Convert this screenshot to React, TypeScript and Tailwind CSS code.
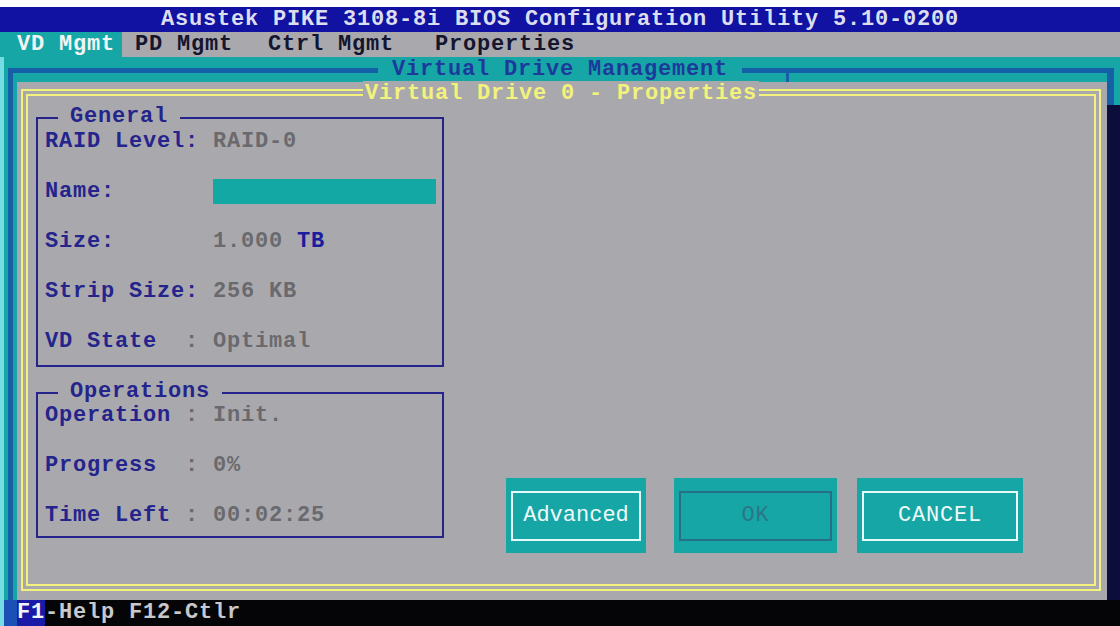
import React from 'react';

// Controller BIOS text-mode screen: 80x25 cells of 14px wide glyphs.

interface GroupBoxProps {
  title: string;
  className?: string;
  children: React.ReactNode;
}

function GroupBox({ title, className = '', children }: GroupBoxProps) {
  return (
    <div className={`border-2 border-[#24248c] ${className}`}>
      <div className="-mt-[14px] h-[24px] flex">
        <span className="ml-[20px] px-[12px] bg-[#a9a9ad] text-[#24248c] leading-[24px]">{title}</span>
      </div>
      {children}
    </div>
  );
}

interface RowProps {
  label: string;
  value?: string;
  className?: string;
  children?: React.ReactNode;
}

function Row({ label, value, className = '', children }: RowProps) {
  return (
    <div className={`h-[25px] pl-[7px] whitespace-pre flex ${className}`}>
      <span className="text-[#24248c]">{label}</span>
      {value && <span className="text-[#6a6a6e]">{value}</span>}
      {children}
    </div>
  );
}

interface DialogButtonProps {
  label: string;
  className: string;
  frame: string;
}

function DialogButton({ label, className, frame }: DialogButtonProps) {
  return (
    <div className={`h-[75px] bg-[#17a6a6] flex items-center px-[5px] ${className}`}>
      <div className={`flex-1 h-[50px] border-2 flex items-center justify-center font-normal ${frame}`}>
        {label}
      </div>
    </div>
  );
}

export default function App() {
  return (
    <div className="w-[1120px] h-[626px] overflow-hidden bg-white flex flex-col font-['Liberation_Mono','DejaVu_Sans_Mono',monospace] font-bold text-[22px] tracking-[0.8px] leading-[25px]">
      <div className="h-[7px] bg-white" />

      {/* title bar */}
      <div className="h-[25px] bg-[#1111a2] text-[#dcdef0] flex items-center justify-center whitespace-pre">
        Asustek PIKE 3108-8i BIOS Configuration Utility 5.10-0200
      </div>

      {/* menu bar */}
      <div className="h-[25px] bg-[#a9a9ad] text-[#151530] flex whitespace-pre">
        <span className="bg-[#17a6a6] text-[#f2f4f4] pl-[17px] pr-[7px]">VD Mgmt</span>
        <span className="ml-[13px]">PD Mgmt</span>
        <span className="ml-[35px]">Ctrl Mgmt</span>
        <span className="ml-[41px]">Properties</span>
      </div>

      <div className="flex-1 flex">
        <div className="w-[4px] bg-[#74dce2]" />

        <div className="flex-1 bg-[#17a6a6] pl-[4px] pt-[11px] flex flex-col">
          {/* Virtual Drive Management window */}
          <div className="flex-1 border-t-[5px] border-l-[5px] border-[#1660a8] flex flex-col">
            <div className="-mt-[16px] h-[25px] grid grid-cols-[1fr_auto_1fr] whitespace-pre">
              <div />
              <span className="bg-[#17a6a6] px-[14px] text-[#1c3a9c]">Virtual Drive Management</span>
              <div className="flex items-end">
                <div className="ml-[44px] w-[3px] h-[9px] bg-[#1660a8]" />
              </div>
            </div>

            <div className="flex-1 ml-[4px] bg-[#a9a9ad] pt-[7px] pl-[4px] pr-[6px] pb-[9px] flex flex-col">
              {/* properties dialog */}
              <div className="flex-1 border-[7px] border-double border-[#f2f27c] flex flex-col">
                <div className="-mt-[15px] h-[25px] flex justify-center whitespace-pre">
                  <span className="bg-[#a9a9ad] px-[2px] text-[#f2f27c]">Virtual Drive 0 - Properties</span>
                </div>

                <div className="flex-1 flex pt-[11px]">
                  <div className="ml-[8px] w-[408px] flex flex-col">
                    <GroupBox title="General" className="pb-[11px]">
                      <Row label="RAID Level:" value=" RAID-0" />
                      <Row label="Name:" className="mt-[25px]">
                        <span>{'       '}</span>
                        <span className="inline-block w-[223px] h-[25px] bg-[#14a8a4]" />
                      </Row>
                      <Row label="Size:" value="       1.000 " className="mt-[25px]">
                        <span className="text-[#1c1c9e]">TB</span>
                      </Row>
                      <Row label="Strip Size:" value=" 256 KB" className="mt-[25px]" />
                      <Row label="VD State" value="  : Optimal" className="mt-[25px]" />
                    </GroupBox>

                    <GroupBox title="Operations" className="mt-[25px] pb-[8px]">
                      <Row label="Operation" value=" : Init." className="-mt-px" />
                      <Row label="Progress" value="  : 0%" className="mt-[25px]" />
                      <Row label="Time Left" value=" : 00:02:25" className="mt-[25px]" />
                    </GroupBox>
                  </div>

                  <div className="flex-1 flex flex-col">
                    <div className="mt-[361px] ml-[62px] flex">
                      <DialogButton label="Advanced" className="w-[140px]" frame="border-[#e6fafa] text-[#eefafa] tracking-[0px]" />
                      <DialogButton label="OK" className="ml-[28px] w-[163px]" frame="border-[#276f86] text-[#2a7688]" />
                      <DialogButton label="CANCEL" className="ml-[20px] w-[166px]" frame="border-[#e6fafa] text-[#eefafa]" />
                    </div>
                  </div>
                </div>
              </div>
            </div>
          </div>
        </div>

        {/* right edge: frame corner and shadow */}
        <div className="w-[13px] flex flex-col">
          <div className="h-[11px] bg-[#17a6a6]" />
          <div className="h-[37px] flex">
            <div className="w-[7px] bg-[#1660a8]" />
            <div className="flex-1 bg-[#17a6a6]" />
          </div>
          <div className="flex-1 bg-[#0d0d3c]" />
        </div>
      </div>

      {/* key help line */}
      <div className="h-[26px] bg-[#050508] flex items-stretch whitespace-pre">
        <div className="w-[4px] bg-[#74dce2]" />
        <div className="w-[13px] bg-[#1c50b4]" />
        <span className="bg-[#1a1aa8] text-[#f4f4f4] leading-[26px]">F1</span>
        <span className="text-[#c8c8cc] leading-[26px]">-Help F12-Ctlr</span>
      </div>
    </div>
  );
}
